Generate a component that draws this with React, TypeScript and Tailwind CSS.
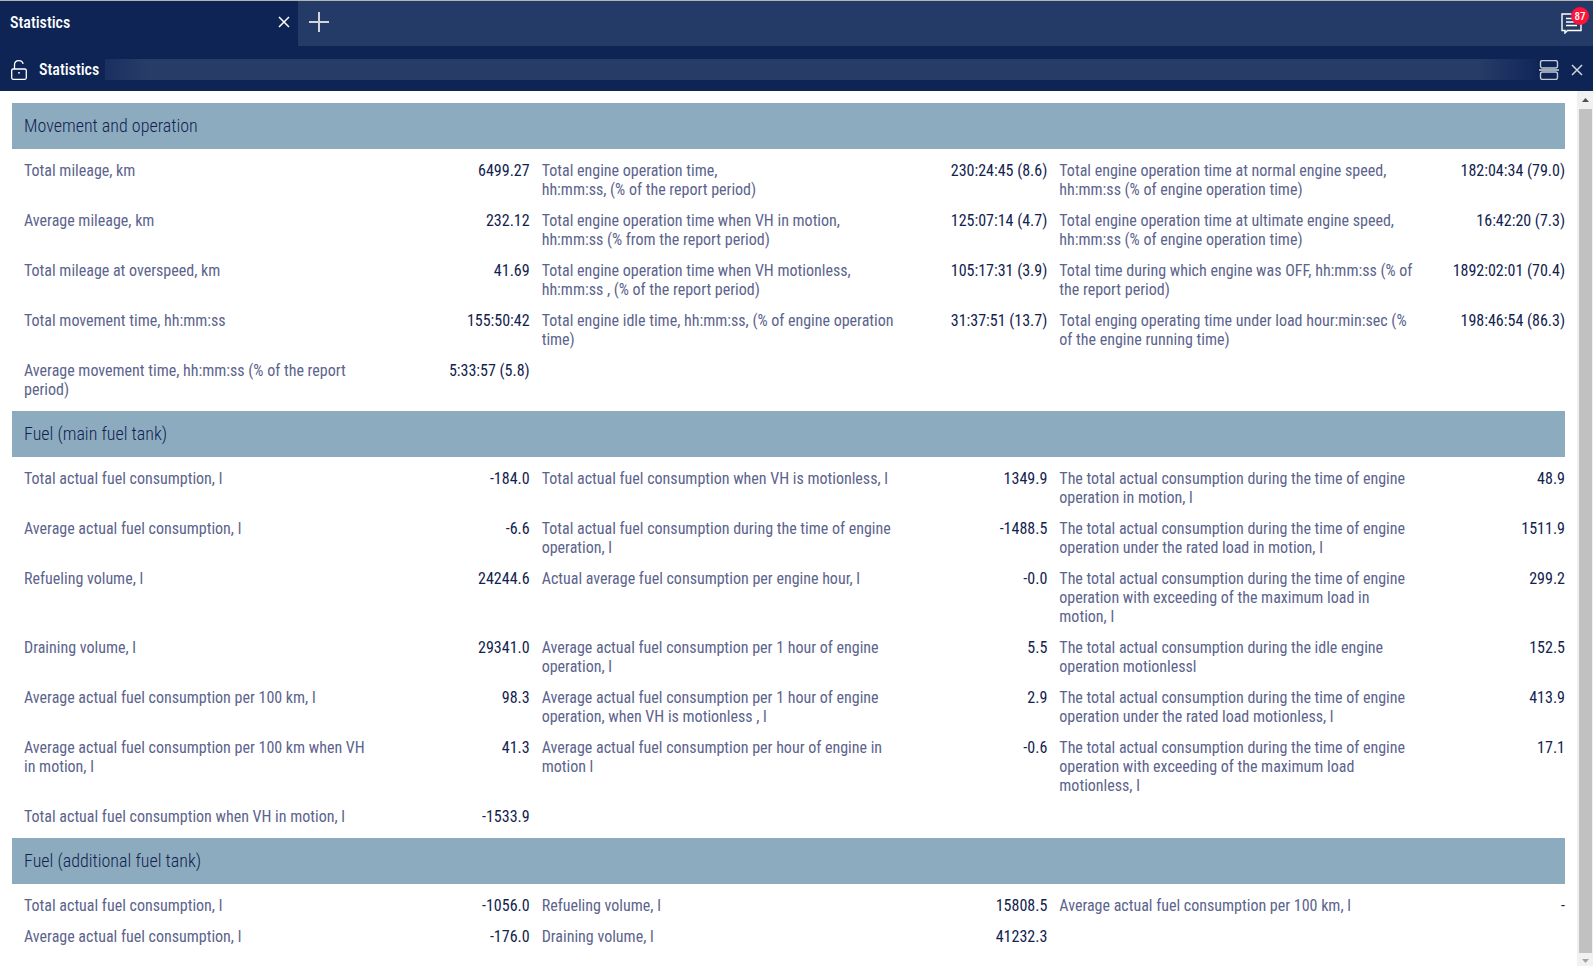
import React from "react";

type Entry = [label: string, value: string];
type Section = { title: string; rows: (Entry | null)[][] };

const sections: Section[] = [
  {
    title: "Movement and operation",
    rows: [
      [
        ["Total mileage, km", "6499.27"],
        ["Total engine operation time,\nhh:mm:ss, (% of the report period)", "230:24:45 (8.6)"],
        ["Total engine operation time at normal engine speed, hh:mm:ss (% of engine operation time)", "182:04:34 (79.0)"],
      ],
      [
        ["Average mileage, km", "232.12"],
        ["Total engine operation time when VH in motion,\nhh:mm:ss (% from the report period)", "125:07:14 (4.7)"],
        ["Total engine operation time at ultimate engine speed, hh:mm:ss (% of engine operation time)", "16:42:20 (7.3)"],
      ],
      [
        ["Total mileage at overspeed, km", "41.69"],
        ["Total engine operation time when VH motionless,\nhh:mm:ss , (% of the report period)", "105:17:31 (3.9)"],
        ["Total time during which engine was OFF, hh:mm:ss (% of the report period)", "1892:02:01 (70.4)"],
      ],
      [
        ["Total movement time, hh:mm:ss", "155:50:42"],
        ["Total engine idle time, hh:mm:ss, (% of engine operation time)", "31:37:51 (13.7)"],
        ["Total enging operating time under load hour:min:sec (% of the engine running time)", "198:46:54 (86.3)"],
      ],
      [["Average movement time, hh:mm:ss (% of the report period)", "5:33:57 (5.8)"], null, null],
    ],
  },
  {
    title: "Fuel (main fuel tank)",
    rows: [
      [
        ["Total actual fuel consumption, l", "-184.0"],
        ["Total actual fuel consumption when VH is motionless, l", "1349.9"],
        ["The total actual consumption during the time of engine operation in motion, l", "48.9"],
      ],
      [
        ["Average actual fuel consumption, l", "-6.6"],
        ["Total actual fuel consumption during the time of engine operation, l", "-1488.5"],
        ["The total actual consumption during the time of engine operation under the rated load in motion, l", "1511.9"],
      ],
      [
        ["Refueling volume, l", "24244.6"],
        ["Actual average fuel consumption per engine hour, l", "-0.0"],
        ["The total actual consumption during the time of engine operation with exceeding of the maximum load in motion, l", "299.2"],
      ],
      [
        ["Draining volume, l", "29341.0"],
        ["Average actual fuel consumption per 1 hour of engine operation, l", "5.5"],
        ["The total actual consumption during the idle engine operation motionlessl", "152.5"],
      ],
      [
        ["Average actual fuel consumption per 100 km, l", "98.3"],
        ["Average actual fuel consumption per 1 hour of engine operation, when VH is motionless , l", "2.9"],
        ["The total actual consumption during the time of engine operation under the rated load motionless, l", "413.9"],
      ],
      [
        ["Average actual fuel consumption per 100 km when VH in\u00a0motion, l", "41.3"],
        ["Average actual fuel consumption per hour of engine in motion l", "-0.6"],
        ["The total actual consumption during the time of engine operation with exceeding of the maximum load motionless, l", "17.1"],
      ],
      [["Total actual fuel consumption when VH in motion, l", "-1533.9"], null, null],
    ],
  },
  {
    title: "Fuel (additional fuel tank)",
    rows: [
      [
        ["Total actual fuel consumption, l", "-1056.0"],
        ["Refueling volume, l", "15808.5"],
        ["Average actual fuel consumption per 100 km, l", "-"],
      ],
      [["Average actual fuel consumption, l", "-176.0"], ["Draining volume, l", "41232.3"], null],
    ],
  },
];

function StatSection({ title, rows }: Section) {
  return (
    <section className="pb-3">
      <h2 className="flex h-[46px] items-center bg-[#8dabbf] px-3 text-lg font-[350] text-[#12224f]">{title}</h2>
      <table className="w-full table-fixed border-collapse text-base leading-[19px]">
        <colgroup>
          {[0, 1, 2].map((i) => (
            <React.Fragment key={i}>
              <col className="w-[24%]" />
              <col />
            </React.Fragment>
          ))}
        </colgroup>
        <tbody>
          {rows.map((row, r) => (
            <tr key={r} className="align-top">
              {row.map((entry, c) =>
                entry ? (
                  <React.Fragment key={c}>
                    <th scope="row" className="whitespace-pre-line pt-3 pl-3 text-left font-normal text-[#5c648d]">
                      {entry[0]}
                    </th>
                    <td className="pt-3 text-right whitespace-nowrap text-[#12224f]">{entry[1]}</td>
                  </React.Fragment>
                ) : (
                  <td key={c} colSpan={2} />
                ),
              )}
            </tr>
          ))}
        </tbody>
      </table>
    </section>
  );
}

function CloseIcon() {
  return (
    <svg width="12" height="12" viewBox="0 0 12 12" stroke="currentColor" fill="none" strokeWidth="1.5">
      <path d="M1 1l10 10M11 1L1 11" />
    </svg>
  );
}

export default function App() {
  return (
    <div className="flex min-h-screen flex-col border-t border-[#b4b4b4] bg-white font-['Roboto_Condensed',Roboto,sans-serif]">
      <header className="bg-[#0e2454] text-white">
        <div className="flex h-[45px] bg-[#243b67]">
          <div className="flex w-[298px] items-center justify-between bg-[#0e2454] pr-2 pb-[2px] pl-[10px]">
            <span className="text-base font-medium">Statistics</span>
            <button aria-label="Close tab" className="pb-[2px]">
              <CloseIcon />
            </button>
          </div>
          <button aria-label="New tab" className="pb-[3px] pl-[11px] text-[#d0d5df]">
            <svg width="20" height="20" viewBox="0 0 20 20" stroke="currentColor" strokeWidth="2">
              <path d="M10 0v20M0 10h20" />
            </svg>
          </button>
          <button aria-label="Messages" className="relative mr-[11px] ml-auto">
            <svg width="21" height="21" viewBox="0 0 21 21" stroke="currentColor" fill="none" strokeWidth="1.4">
              <path d="M1 1h19v16.500H6.500L4 20v-2.500H1zM5 5.500h11M5 9h11M5 12.500h11" />
            </svg>
            <span className="absolute top-[6px] left-[10px] flex size-[18px] items-center justify-center rounded-full bg-[#fa1439] text-[11px] leading-none font-medium">
              87
            </span>
          </button>
        </div>
        <div className="flex h-[45px] items-center pt-[2px] pr-[10px] pl-[11px]">
          <button aria-label="Unlock">
            <svg width="16" height="20" viewBox="0 0 16 20" stroke="currentColor" fill="none" strokeWidth="1.3">
              <rect x="0.700" y="9" width="14.600" height="10.300" rx="1.500" />
              <path d="M3.500 9V5C3.500 2.500 5 0.700 7.800 0.700c2.500 0 4 1.500 4.200 3.300M7 12.800h2" />
            </svg>
          </button>
          <h1 className="ml-3 text-base font-medium">Statistics</h1>
          <div className="mr-[2px] ml-[6px] h-[21px] flex-1 bg-linear-to-r from-[#1b3060] from-0% via-[#283c68] via-3% to-[#283c68] to-90%">
            <div className="ml-auto h-full w-[60px] bg-linear-to-r from-transparent to-[#11275a]" />
          </div>
          <button aria-label="Split view" className="text-[#c3c8d4]">
            <svg width="20" height="20" viewBox="0 0 20 20" stroke="currentColor" fill="none" strokeWidth="1.4">
              <rect x="1.500" y="0.500" width="17" height="7.500" rx="2" />
              <rect x="1.500" y="12" width="17" height="7.500" rx="2" />
              <path d="M0 10h20" strokeWidth="2" opacity="0.800" />
            </svg>
          </button>
          <button aria-label="Close panel" className="ml-3 text-[#d0d5df]">
            <CloseIcon />
          </button>
        </div>
      </header>
      <div className="flex flex-1">
        <main className="flex-1 px-3 pt-3">
          {sections.map((s) => (
            <StatSection key={s.title} {...s} />
          ))}
        </main>
        <div aria-hidden="true" className="flex w-4 flex-col items-center bg-[#f1f1f1]">
          <svg width="16" height="18" viewBox="0 0 16 18" fill="#505050">
            <path d="M5 11l3.500-4L12 11z" />
          </svg>
          <div className="w-[13px] flex-1 bg-[#c1c1c1]" />
          <svg width="16" height="13" viewBox="0 0 16 13" fill="#a3a3a3">
            <path d="M5 6h7l-3.500 4z" />
          </svg>
        </div>
      </div>
    </div>
  );
}
